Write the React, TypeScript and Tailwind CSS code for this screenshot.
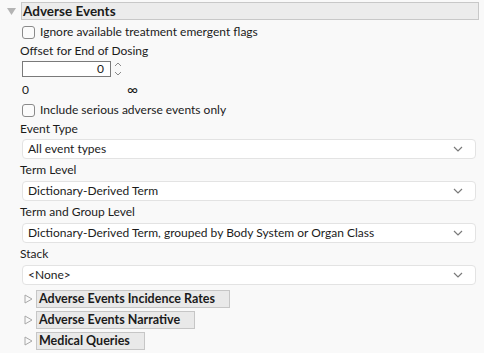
const Chevron = () => (
  <svg width="10" height="6" viewBox="0 0 10 6" className="shrink-0">
    <path d="M1 1 L5 5 L9 1" fill="none" stroke="#7a7a7a" strokeWidth="1.2" />
  </svg>
);

const Dropdown = ({ label, value }: { label: string; value: string }) => (
  <div>
    <div className="h-[22px] flex items-center">{label}</div>
    <div className="ml-[2px] mr-[8px] h-[20px] flex items-center justify-between pl-[5px] pr-[12px] bg-white border border-[#e3e3e3] rounded-[4px]">
      <span>{value}</span>
      <Chevron />
    </div>
  </div>
);

const Checkbox = ({ label, className }: { label: string; className: string }) => (
  <div className={`${className} flex items-center gap-[5px] pl-[2px]`}>
    <span className="w-[13px] h-[13px] rounded-[3px] border border-[#8a8a8a] bg-[#fbfbfb]" />
    <span>{label}</span>
  </div>
);

const Outline = ({ title }: { title: string }) => (
  <div className="flex items-center h-[18px]">
    <svg width="14" height="12" viewBox="0 0 14 12" className="shrink-0 ml-[1px]">
      <path d="M4 2 L11 6 L4 10 Z" fill="none" stroke="#a8a8a8" strokeWidth="1" />
    </svg>
    <div className="ml-[1px] h-[18px] flex items-center pl-[2px] pr-[14px] bg-[#e9e9e9] border border-[#c6c6c6] font-bold text-[12.5px]">
      {title}
    </div>
  </div>
);

export default function App() {
  return (
    <div
      className="w-[484px] h-[353px] bg-[#f9f9f9] text-[#1b1b1b] text-[12px] overflow-hidden"
      style={{ fontFamily: 'Lato, "Open Sans", sans-serif' }}
    >
      <div className="flex items-center pt-[2px] pr-[5px]">
        <svg width="21" height="18" viewBox="0 0 21 18" className="shrink-0">
          <path d="M7 6 L16 6 L11.5 13 Z" fill="#b4b4b4" />
        </svg>
        <div className="flex-1 h-[18px] flex items-center pl-[1px] bg-[#ececec] border border-[#c8c8c8] font-bold text-[13.5px]">
          Adverse Events
        </div>
      </div>

      <div className="pl-[20px]">
        <Checkbox className="h-[24px]" label="Ignore available treatment emergent flags" />
        <div className="h-[14px] flex items-center">Offset for End of Dosing</div>
        <div className="mt-[3px] h-[16px] flex items-center pl-[2px]">
          <div className="w-[89px] h-[16px] bg-white border border-[#7a7a7a] flex items-center justify-end pr-[6px]">0</div>
          <svg width="10" height="16" viewBox="0 0 10 16" className="ml-[2px]">
            <path d="M2 5 L5 2 L8 5" fill="none" stroke="#8a8a8a" strokeWidth="1" />
            <path d="M2 11 L5 14 L8 11" fill="none" stroke="#8a8a8a" strokeWidth="1" />
          </svg>
        </div>
        <div className="mt-[4px] h-[18px] flex items-center pl-[2px]">
          <span className="w-[105px]">0</span>
          <span className="text-[15px] leading-none -mt-[2px]">∞</span>
        </div>
        <Checkbox className="h-[22px]" label="Include serious adverse events only" />
        <div className="h-[16px] flex items-center">Event Type</div>
        <div className="mt-[2px] ml-[2px] mr-[8px] h-[20px] flex items-center justify-between pl-[5px] pr-[12px] bg-white border border-[#e3e3e3] rounded-[4px]">
          <span>All event types</span>
          <Chevron />
        </div>
        <Dropdown label="Term Level" value="Dictionary-Derived Term" />
        <Dropdown label="Term and Group Level" value="Dictionary-Derived Term, grouped by Body System or Organ Class" />
        <Dropdown label="Stack" value="<None>" />
        <div className="mt-[5px] flex flex-col gap-[3px]">
          <Outline title="Adverse Events Incidence Rates" />
          <Outline title="Adverse Events Narrative" />
          <Outline title="Medical Queries" />
        </div>
      </div>
    </div>
  );
}
